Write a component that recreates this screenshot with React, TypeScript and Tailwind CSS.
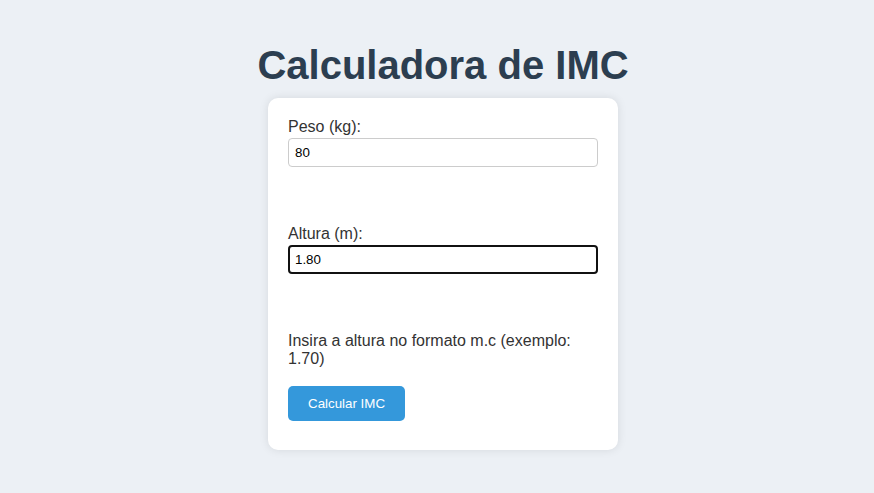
import { useEffect, useRef, useState } from "react";

export default function App() {
  const [peso, setPeso] = useState("80");
  const [altura, setAltura] = useState("1.80");
  const alturaRef = useRef<HTMLInputElement>(null);

  useEffect(() => {
    const el = alturaRef.current;
    if (el) {
      el.focus();
      el.setSelectionRange(el.value.length, el.value.length);
    }
  }, []);

  return (
    <div className="min-h-[493px] w-full bg-[#ecf0f5] font-['Liberation_Sans',Arial,sans-serif] text-[#333]">
      <div className="flex flex-col items-center pl-[12px] pt-[42px]">
        <h1 className="text-[40px] font-bold leading-[46px] text-[#2c3e50]">
          Calculadora de IMC
        </h1>

        <div className="mt-[10px] w-[350px] rounded-[10px] bg-white p-[20px] pb-[29px] shadow-[0_0_10px_rgba(0,0,0,0.1)]">
          <label className="block text-[16px] leading-[18px]">Peso (kg):</label>
          <input
            type="text"
            value={peso}
            onChange={(e) => setPeso(e.target.value)}
            className="mt-[2px] block h-[29px] w-full rounded-[4px] border border-[#ccc] px-[6px] text-[13.33px] text-black outline-none"
          />

          <label className="mt-[58px] block text-[16px] leading-[18px]">Altura (m):</label>
          <input
            ref={alturaRef}
            type="text"
            value={altura}
            onChange={(e) => setAltura(e.target.value)}
            className="mt-[2px] block h-[29px] w-full rounded-[4px] border-2 border-[#111] px-[5px] text-[13.33px] text-black caret-black outline-none"
          />

          <p className="mt-[58px] text-[16px] leading-[18px]">
            Insira a altura no formato m.c (exemplo: 1.70)
          </p>

          <button className="mt-[18px] h-[35px] rounded-[5px] bg-[#3498db] px-[20px] text-[13.33px] text-white">
            Calcular IMC
          </button>
        </div>
      </div>
    </div>
  );
}
